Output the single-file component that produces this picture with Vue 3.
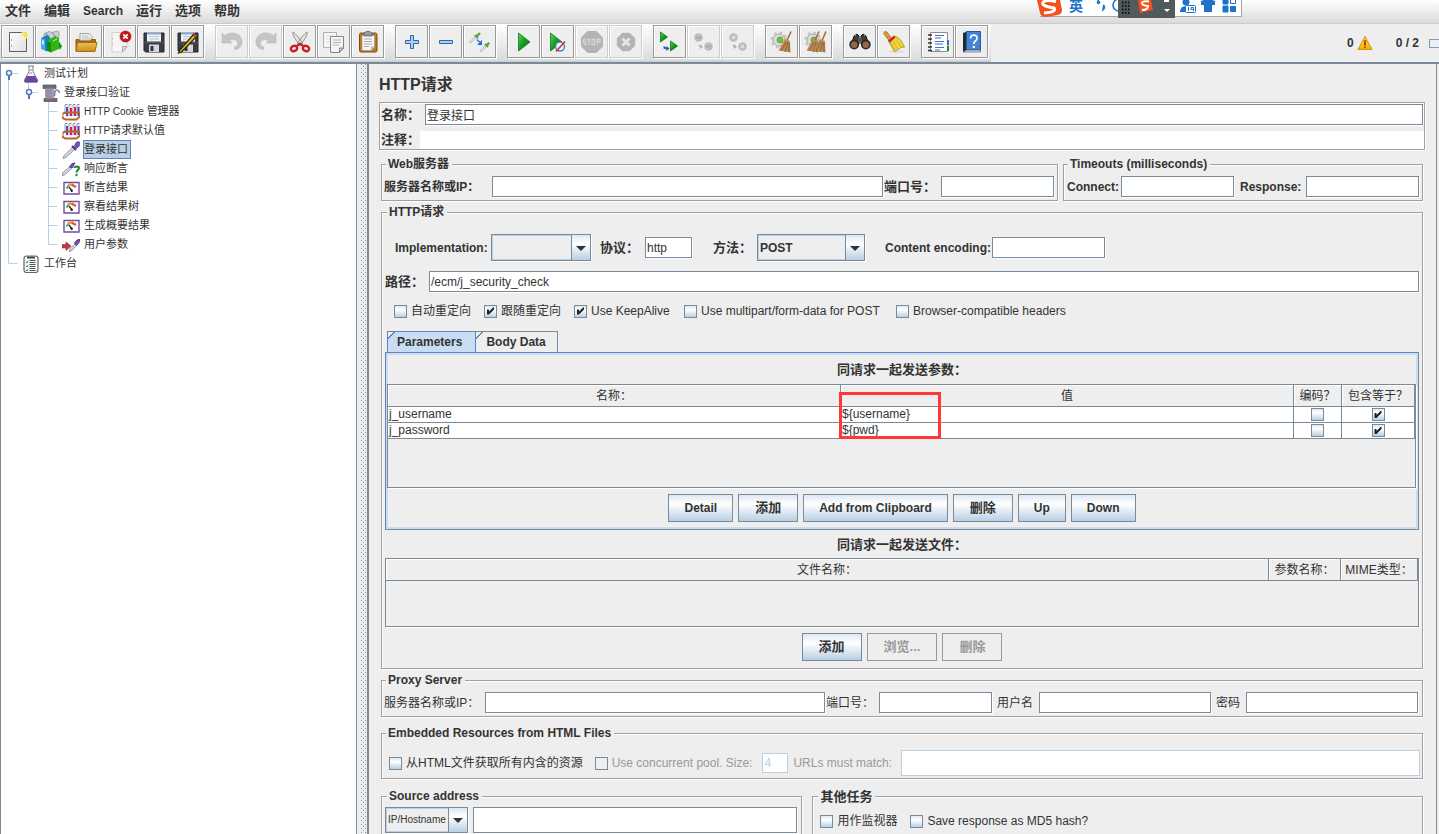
<script setup>
import { ref } from 'vue'

const menus = ['文件', '编辑', 'Search', '运行', '选项', '帮助']

const floppy =
  '<path d="M2 3h20v19H3.500l-1.500-1.500z" fill="#3b3d42" stroke="#24262a"/><path d="M5 2.500h14v9H5z" fill="#eef3f8"/><path d="M5 2.500h14v2H5z" fill="#86a9cf"/><path d="M7 6.500h10M7 9h10" stroke="#b9c6d4"/><path d="M7 14.500h10V22H7z" fill="#d5d7da"/><path d="M8.500 16h3v5h-3z" fill="#33353a"/><path d="M2.500 12.500h19" stroke="#55585e"/>'
const broom = (x) =>
  `<path d="M${x + 8} 1.500l-4 9" stroke="#a0703c" stroke-width="1.600"/><path d="M${x + 2} 9l5 2 .5 11.500-12-2z" fill="#b98a58"/><path d="M${x + 3} 12l-5 9M${x + 5} 12l-3 10M${x + 6} 13v9" stroke="#80552a" stroke-width=".7"/>`
const gear =
  '<circle cx="9" cy="10" r="6" fill="#dcdcdc" stroke="#a5a5a5"/><circle cx="9" cy="10" r="7.500" fill="none" stroke="#c4c4c4" stroke-width="2" stroke-dasharray="3 2.900"/><circle cx="10" cy="10" r="3" fill="#74c52c" stroke="#578f2b" stroke-width=".7"/>'
const play = (x, y, s, h) =>
  `<path d="M${x} ${y}l${s} ${h}l-${s} ${h}z" fill="url(#g-green)" stroke="#087a14" stroke-width=".8"/>`
const octagon = (cx, cy, r) => {
  const k = r * 0.42
  return `<path d="M${cx - k} ${cy - r}h${2 * k}l${r - k} ${r - k}v${2 * k}l-${r - k} ${r - k}h-${2 * k}l-${r - k} -${r - k}v-${2 * k}z" fill="#b4b4b4" stroke="#a6a6a6" stroke-width=".7"/>`
}

const glyphs = {
  blank: '<path d="M3.500 2.500h17v19h-17z" fill="url(#g-page)" stroke="#5f5f5f"/><path d="M5.500 9v2M5.500 15v2" stroke="#aaa"/><circle cx="19" cy="5" r="4" fill="#fff3a0" opacity=".8"/><path d="M19 1.500l1 2.500 2.500 1-2.500 1-1 2.500-1-2.500-2.500-1 2.500-1z" fill="#f2df62"/>',
  templates: '<path d="M4 3.500l5-2 3 1 5-1.500 2 1v7H4z" fill="#c9ced2" stroke="#8c9296" stroke-width=".7"/><path d="M6 3l3 4M12 2l3 4" stroke="#888"/><path d="M1 8l6-3 3 2v13l-3 1.500-6-3z" fill="#1a80c6"/><path d="M1 8l4 1v11.500l-4-2z" fill="#42aee8"/><path d="M2 10l2 .8v4l-2-.8z" fill="#c5ebff"/><path d="M15 6l7 10-2 4z" fill="#188c0c"/><path d="M7 11l8-5 4 2v11l-8 3.500-4-2z" fill="#31b615"/><path d="M7 11l4 1.500v10l-4-2z" fill="#158b0a"/><path d="M13 11l4-2" stroke="#bdf59d"/>',
  open: '<path d="M6 11V3.500h9l3 3V12z" fill="#eee" stroke="#8f8f8f" stroke-width=".8"/><path d="M8 6h6M8 8h8M8 10h8" stroke="#bbb"/><path d="M2 21V9.500h3L6 11h11V9.500h4.500V14" fill="#a76f15" stroke="#916012"/><path d="M3.500 12.500h19.500l-2 9H2z" fill="url(#g-folder)" stroke="#a76f15"/>',
  close: '<path d="M4 2.500h15v14l-5 5.500H4z" fill="#f6f6f6" stroke="#d2d2d2"/><path d="M19 16.500h-4.500V22z" fill="#ddd" stroke="#999" stroke-width=".8"/><path d="M4.500 8v1M4.500 14v1" stroke="#aaa"/><circle cx="17.500" cy="6.500" r="5.500" fill="#c81414" stroke="#8e0f0f" stroke-width=".6"/><path d="M15.300 4.300l4.400 4.400m0-4.400l-4.400 4.400" stroke="#fff" stroke-width="1.800"/>',
  save: floppy,
  saveAs: floppy + '<path d="M17.500 4.500L3.500 20.500l-1 2.500 3-1L20 7z" fill="#e6b92b" stroke="#2e2504" stroke-width="1.200"/><path d="M17 4.500l2.500 3L21 5.500 18.500 3z" fill="#d34a40" stroke="#65201c" stroke-width=".6"/>',
  undo: '<path d="M2 3l2.500 2.500C11 .8 21 2.500 22 11c.5 5-3 8.500-7.500 8.500v-2.800c3.500-.7 4-3.200 2.500-5.200-2-2.500-5.500-2.300-7.500-.8L12 13H2z" fill="#c5c5c5" stroke="#b9b9b9" stroke-width=".6"/>',
  redo: '<path d="M22 3l-2.500 2.500C13 .8 3 2.500 2 11c-.5 5 3 8.500 7.500 8.500v-2.800C6 16 5.500 13.500 7 11.500c2-2.500 5.500-2.300 7.500-.8L12 13h10z" fill="#c5c5c5" stroke="#b9b9b9" stroke-width=".6"/>',
  cut: '<path d="M5 2c-1 3 3 9 8 14l2-2C12 9 8 4 5 2zM19 2c1 3-3 9-8 14l-2-2c3-5 7-10 10-12z" fill="#e3e3e3" stroke="#858585" stroke-width=".9"/><ellipse cx="6" cy="18.500" rx="3.200" ry="2.600" fill="#eee" stroke="#cf1820" stroke-width="2.400" transform="rotate(-20 6 18.500)"/><ellipse cx="18" cy="18.500" rx="3.200" ry="2.600" fill="#eee" stroke="#cf1820" stroke-width="2.400" transform="rotate(20 18 18.500)"/><path d="M9 16l3-2.500 3 2.500" fill="none" stroke="#cf1820" stroke-width="2"/>',
  copy: '<path d="M1.500 2.500h13v15h-13z" fill="#f6f6f6" stroke="#b0b0b0"/><path d="M4 6h8M4 9h8M4 12h8" stroke="#ddd"/><path d="M8.500 6.500h13V18l-4 4.500h-9z" fill="#f4f4f4" stroke="#858585"/><path d="M21.500 18h-4v4.500z" fill="#ccc" stroke="#777" stroke-width=".8"/><path d="M11 10h8M11 12.500h8M11 15h6" stroke="#b4b4b4"/>',
  paste: '<rect x="3.500" y="3" width="17.500" height="19" rx="1.500" fill="#bd7a1c" stroke="#7e4d0d"/><path d="M6 5.500h12.500V17l-3.500 3.500H6z" fill="#f7f7f7" stroke="#999" stroke-width=".7"/><path d="M18.500 16.500H15v4z" fill="#bbb"/><path d="M8 9h8M8 11.500h8M8 14h8M8 16.500h5" stroke="#aaa"/><path d="M8 3.500l2-2h4l2 2v2.500H8z" fill="#999" stroke="#5c5c5c" stroke-width=".8"/>',
  plus: '<path d="M10.500 5.500h3v5h5v3h-5v5h-3v-5h-5v-3h5z" fill="#a9d0f2" stroke="#2d67a8"/>',
  minus: '<path d="M5.500 10.500h13v3h-13z" fill="#a9d0f2" stroke="#2d67a8"/>',
  toggle: '<path d="M2 12.500l6-6" stroke="#aaa" stroke-width="2"/><path d="M2.500 12l5-5" stroke="#fff"/><path d="M7 5l3 3M8.500 6.500L12 3" stroke="#5c9f48" stroke-width="2.400"/><path d="M12.500 21.500l5-5" stroke="#aaa" stroke-width="2"/><path d="M13 21l5-5" stroke="#fff"/><path d="M17 14l3 3M18.500 15l3-2" stroke="#5c9f48" stroke-width="2.200"/><path d="M9 9.500l3 3" stroke="#2a78e6" stroke-width="1.600"/><path d="M14 10v5H9z" fill="#1c6ce6"/>',
  run: play(6.5, 3, 11.5, 9),
  runNoTimers: play(4.5, 3, 11.5, 9) + '<circle cx="14" cy="16.500" r="4.500" fill="#e9f1fb" stroke="#4a80c5" stroke-width="1.400"/><path d="M10 21.500l9-10" stroke="#df2626" stroke-width="1.500"/>',
  stop: octagon(12, 12, 10.5) + '<path d="M6 9.500H3.500V12H6v2.500H3.500M7 9.500h3.500M8.800 9.500V15M12 9.500h2.500v5H12zM17 15V9.500h3V12h-3" fill="none" stroke="#d6d6d6" stroke-width="1.300"/>',
  shutdown: octagon(12, 12, 8.7) + '<path d="M8.500 8.500l7 7m0-7l-7 7" stroke="#e6e6e6" stroke-width="2.800"/>',
  remoteStart: play(2.5, 2, 7, 5) + play(12.5, 11, 7, 5) + '<path d="M5.500 16l3 1.500V16l3 2.500-3 2.500v-1.500l-3-1z" fill="#315aa0"/>',
  remoteStop: '<circle cx="6.500" cy="7.500" r="4.300" fill="#bcbcbc"/><circle cx="16.500" cy="16.500" r="4.300" fill="#bcbcbc"/><path d="M4 7.500h5M14 16.500h5" stroke="#a6a6a6" stroke-width="1.600"/><path d="M6 14.500l2 1v-1.500l3 3-3 2v-1.500z" fill="#b2b2b2"/>',
  remoteShutdown: '<circle cx="7.500" cy="7.500" r="4.300" fill="#bcbcbc"/><circle cx="16.500" cy="16.500" r="4.300" fill="#bcbcbc"/><path d="M6 6l3 3m0-3l-3 3M15 15l3 3m0-3l-3 3" stroke="#e2e2e2" stroke-width="1.500"/><path d="M6 14.500l2 1v-1.500l3 3-3 2v-1.500z" fill="#b2b2b2"/>',
  clear: gear + broom(13),
  clearAll: gear + broom(7) + broom(14),
  search: '<path d="M6 6l3-2 2 2v8H3.500zM18 6l-3-2-2 2v8h7.500z" fill="#3d3d3d" stroke="#181818"/><path d="M10 8h4v4h-4z" fill="#555"/><circle cx="6.200" cy="14.500" r="4.900" fill="#292929"/><circle cx="17.800" cy="14.500" r="4.900" fill="#292929"/><circle cx="6.200" cy="14.800" r="3" fill="#a5602f" stroke="#777" stroke-width=".7"/><circle cx="17.800" cy="14.800" r="3" fill="#a5602f" stroke="#777" stroke-width=".7"/><path d="M7 6l1-1M16 5l1 1" stroke="#aaa"/>',
  resetSearch: '<ellipse cx="15" cy="21.500" rx="8" ry="1.500" fill="#ddd"/><path d="M2 2.500c1-1.500 2.500-1 3.500 0l4 6-2.500 2-4-5c-1-1-1.500-2-1-3z" fill="#dc9c31" stroke="#94611a" stroke-width=".7"/><path d="M7 11l6-5c5 2 7 6 9.500 11-2 .5-4 0-5 1.500-2 .5-3 3-5 3C11 18 8 15 7 11z" fill="#f1d637" stroke="#a88512" stroke-width=".8"/><path d="M11 11l5 8M14 9l5 8M9 13l4 7" stroke="#cdab22" stroke-width=".8"/><path d="M6 10.500l6-5 1.500 2L7.500 13z" fill="#cf2420"/>',
  functions: '<path d="M4.500 2.500h17v19h-17z" fill="#fff" stroke="#8d8d8d"/><path d="M21 10h2v5h-2z" fill="#2673e0"/><path d="M21 16h2v5h-2z" fill="#149214"/><path d="M9 5.500h9M9 8h6M9 11.500h9M9 14h8M9 17.500h9M9 20h5" stroke="#3d6fce"/><path d="M2 5h4M2 9h4M2 13h4M2 17h4M2 20.500h4" stroke="#333" stroke-width="1.600"/>',
  help: '<path d="M3 3l4-1.500v19L3 22z" fill="#232a35"/><path d="M6.500 1.500h14V20h-14z" fill="#4384d8" stroke="#27589c"/><path d="M3 22l3.500-2h14v2z" fill="#dadada" stroke="#3a4a60" stroke-width=".6"/><path d="M10.500 8.500c0-4.500 7-4.500 6.500 0C16.800 11 13.800 11 13.800 14" fill="none" stroke="#fff" stroke-width="1.700"/><circle cx="13.800" cy="17" r="1.200" fill="#fff"/>'
}

const toolbar = [
  [['blank', '新建'], ['templates', '模板'], ['open', '打开'], ['close', '关闭'], ['save', '保存'], ['saveAs', '另存为']],
  [['undo', '撤销', true], ['redo', '重做', true], ['cut', '剪切'], ['copy', '复制'], ['paste', '粘贴']],
  [['plus', '展开'], ['minus', '折叠'], ['toggle', '切换']],
  [['run', '启动'], ['runNoTimers', '不停顿启动'], ['stop', '停止', true], ['shutdown', '关停', true]],
  [['remoteStart', '远程启动'], ['remoteStop', '远程停止', true], ['remoteShutdown', '远程关停', true]],
  [['clear', '清除'], ['clearAll', '清除全部']],
  [['search', '查找'], ['resetSearch', '重置查找']],
  [['functions', '函数助手'], ['help', '帮助']]
]

const rack =
  '<path d="M5 2v12M9 2v12M13 2v12M16.500 2v11" stroke="#e9e9f4" stroke-width="3"/><path d="M3 1.500h15" stroke="#8d8d9b" stroke-dasharray="2.500 1.500"/><path d="M5 4v9M16.500 4v9" stroke="#4a4bc0" stroke-width="2"/><path d="M9 5v8M13 4v9" stroke="#d6254d" stroke-width="2"/><path d="M3 2v8M7 2v11M11 2v11M15 2v11" stroke="#8c86ac" stroke-width=".8"/><path d="M1 10.500l3-1h13.500M0 14.500l3.500 2h11l3.500-3" fill="none" stroke="#b5652b" stroke-width="2"/><path d="M1 10v5M17.500 9v5" stroke="#b5652b"/>'
const gauge =
  '<path d="M2 3.500h15v11.500H2z" fill="#fff" stroke="#6d509f" stroke-width="1.400"/><path d="M4.500 9.500l2-3" stroke="#36b54a" stroke-width="2"/><path d="M6 6.500l3.500-1.500" stroke="#e99a2e" stroke-width="2.200"/><path d="M9.500 5.500l4.500 2.500" stroke="#e9513a" stroke-width="2.400"/><path d="M7 8l3 4" stroke="#222" stroke-width="1.300"/><circle cx="9.700" cy="11.700" r="1.200" fill="#222"/>'
const treeGlyphs = {
  flask: '<path d="M6 1h6M7 1v5.500L2.500 15c-.5 1 0 2 1 2h11c1 0 1.500-1 1-2L11 6.500V1" fill="#f8f8fc" stroke="#7d7d8c"/><path d="M5 11h8l3 5-1 1.500H3L2 16z" fill="#6d45a8"/><path d="M8 5h2M7.500 8h2.500" stroke="#8d8d9b"/>',
  spool: '<path d="M1 1h13v3.500H1zM2 14.500h13v3H2z" fill="#736a80" stroke="#4e475a" stroke-width=".7"/><path d="M3 4.500h9.500v10H3z" fill="#a79db5"/><path d="M5 5v9M7 5v9M9 5v9" stroke="#83788f" stroke-width=".8"/><path d="M12.500 12c0-4 .5-6 2.500-6s2 1 2.500 3" fill="none" stroke="#85799a" stroke-width="1.600"/>',
  rack,
  pipette: '<path d="M1 17.500l1-3L11 6l2 2-9 8.500z" fill="#d5d5de" stroke="#85858f" stroke-width=".8"/><path d="M10 5l4 4" stroke="#4d3488" stroke-width="2"/><path d="M12 6l2-4.500L17 .5l1 1.500-1 3.500L13.500 8z" fill="#7554b5" stroke="#54358f" stroke-width=".7"/>',
  assertion: '<path d="M0 15.500l1-3 7-6 1.500 2L2.500 15z" fill="#d5d5de" stroke="#85858f" stroke-width=".8"/><path d="M7.500 7L10 3.500l3-.5-3 5z" fill="#7554b5" stroke="#54358f"/><path d="M12.500 8c0-2 4.500-2 4.500 0s-2.500 2-2.500 4.500" fill="none" stroke="#218034" stroke-width="2"/><circle cx="14.500" cy="15" r="1.200" fill="#218034"/>',
  gauge,
  params: '<path d="M0 8.500h4V6l5 4-5 4.500V12H0z" fill="#c13a43" stroke="#8a2930" stroke-width=".6"/><path d="M7 15.500l1-3 5-4.500 1.500 2L9 15z" fill="#d5d5de" stroke="#85858f" stroke-width=".8"/><path d="M12.500 7L15 4l3-.5-1 3-2.500 3z" fill="#7554b5" stroke="#54358f"/>',
  bench: '<rect x="2" y="1" width="14" height="16.500" rx="2.500" fill="#f6f6f6" stroke="#666" stroke-width="1.200"/><path d="M5 2.500h8" stroke="#444" stroke-width="2"/><path d="M4 7l1 1 1-2M4 11l1 1 1-2M4 15l1 1 1-2" fill="none" stroke="#289a31"/><path d="M7.500 5.500h6M7.500 7.500h6M7.500 9.500h6M7.500 11.500h6M7.500 13.500h6M7.500 15.500h6" stroke="#555"/>'
}
const knob = (x) =>
  `<path d="M${x} 9.500h9" stroke="#b8cfe5"/><circle cx="${x}" cy="9" r="2.500" fill="#fff" stroke="#5578b8" stroke-width="1.500"/><path d="M${x} 11v5" stroke="#5578b8" stroke-width="2"/>`
const trunk = '<path d="M8.500 0v19" stroke="#b8cfe5"/>'
const leaf = (last) => `${trunk}<path d="M48.500 0v${last ? 9.5 : 19}M48.500 9.500h9" fill="none" stroke="#b8cfe5"/>`

const tree = [
  { depth: 1, guide: '<path d="M8.500 9v10" stroke="#b8cfe5"/>' + knob(9), icon: 'flask', text: '测试计划' },
  { depth: 2, guide: trunk + '<path d="M28.500 0v9" stroke="#b8cfe5"/>' + knob(29), icon: 'spool', text: '登录接口验证' },
  { depth: 3, guide: leaf(), icon: 'rack', latin: 'HTTP Cookie ', text: '管理器' },
  { depth: 3, guide: leaf(), icon: 'rack', latin: 'HTTP', text: '请求默认值' },
  { depth: 3, guide: leaf(), icon: 'pipette', text: '登录接口', selected: true },
  { depth: 3, guide: leaf(), icon: 'assertion', text: '响应断言' },
  { depth: 3, guide: leaf(), icon: 'gauge', text: '断言结果' },
  { depth: 3, guide: leaf(), icon: 'gauge', text: '察看结果树' },
  { depth: 3, guide: leaf(), icon: 'gauge', text: '生成概要结果' },
  { depth: 3, guide: leaf(true), icon: 'params', text: '用户参数' },
  { depth: 1, guide: '<path d="M8.500 0v9.500h9" fill="none" stroke="#b8cfe5"/>', icon: 'bench', text: '工作台' }
]
const guideWidth = { 1: 22, 2: 42, 3: 62 }

const name = ref('登录接口')
const protocol = ref('http')
const path = ref('/ecm/j_security_check')
const poolSize = ref('4')
const options = ref([
  { text: '自动重定向', on: false },
  { text: '跟随重定向', on: true },
  { text: 'Use KeepAlive', on: true },
  { text: 'Use multipart/form-data for POST', on: false },
  { text: 'Browser-compatible headers', on: false }
])
const params = ref([
  { name: 'j_username', value: '${username}', encode: false, equals: true },
  { name: 'j_password', value: '${pwd}', encode: false, equals: true }
])
const paramActions = ['Detail', '添加', 'Add from Clipboard', '删除', 'Up', 'Down']
const fileActions = [
  { text: '添加', off: false },
  { text: '浏览...', off: true },
  { text: '删除', off: true }
]
const isCjk = (s) => /[\u4e00-\u9fff]/.test(s)
</script>

<template>
  <div class="app">
    <svg class="defs" width="0" height="0" aria-hidden="true">
      <defs>
        <linearGradient id="g-green" x2="1" y2="1"><stop offset="0" stop-color="#5fd45c" /><stop offset=".5" stop-color="#129a1c" /><stop offset="1" stop-color="#0a7d12" /></linearGradient>
        <linearGradient id="g-page" x2="1" y2="1"><stop offset="0" stop-color="#fff" /><stop offset="1" stop-color="#dedede" /></linearGradient>
        <linearGradient id="g-folder" x2="0" y2="1"><stop offset="0" stop-color="#f0be55" /><stop offset="1" stop-color="#cf8d1d" /></linearGradient>
        <linearGradient id="g-warn" x2="0" y2="1"><stop offset="0" stop-color="#ffe63b" /><stop offset="1" stop-color="#f7b500" /></linearGradient>
      </defs>
    </svg>

    <nav class="menubar">
      <button v-for="m in menus" :key="m" type="button" :class="{ cjk: isCjk(m) }">{{ m }}</button>
    </nav>

    <div class="ime" aria-hidden="true">
      <svg width="207" height="18" viewBox="0 0 207 18">
        <path d="M1 0h205v16H6z" fill="#fff" />
        <path d="M4 16.500h201.500V0" fill="none" stroke="#9fa3b3" />
        <path d="M1 0h23l2 10q0 4-4 5l-12 2q-5 0-6-4z" fill="#f4511e" />
        <path d="M20 1.500Q9-1 7 2.500T18 8q3 4-10 5" fill="none" stroke="#fff" stroke-width="3" />
        <path d="M62 0l2 2-1 2-2-1zM67 5c3 0 2 5-1 6" fill="#1e73c8" stroke="#1e73c8" />
        <circle cx="83" cy="5" r="6" fill="none" stroke="#1e73c8" stroke-width="1.600" />
        <path d="M82 0h57v18H82z" fill="#515b5d" />
        <path d="M86 2.500h9M86 6h9M86 9.500h9M86 13h9" stroke="#111" stroke-width="2" stroke-dasharray="1.500 1.500" />
        <path d="M102 0h13l2 10-13 3z" fill="#f4511e" />
        <path d="M113 1.500q-7-1-7 1.500t6 3q0 4-6 4" fill="none" stroke="#fff" stroke-width="2" />
        <path d="M128 0h5v2h-5zM128 9h6l-3 3z" fill="#fff" />
        <circle cx="150" cy="2" r="3.500" fill="#1e73c8" /><path d="M144 12q0-6 6-6t6 6z" fill="#1e73c8" />
        <rect x="149.500" y="5.500" width="10" height="7" rx="1" fill="#fff" stroke="#1e73c8" /><path d="M152.500 7v4M157.500 11V7.500h-2.500v2h2.500" fill="none" stroke="#1e73c8" />
        <path d="M165 1l4-1.500h6l4 1.500v4h-3v7h-8V5h-3z" fill="#1e73c8" />
        <path d="M187 0h5v4h-5zM187 6h5v6h-5zM194.500 6.500h5v5h-5z" fill="#1e73c8" stroke="#1e73c8" /><path d="M194.500 0v3.500h5V0" fill="none" stroke="#1e73c8" />
      </svg>
      <span class="ime-mode">英</span>
    </div>

    <div class="toolbar">
      <div class="tools">
        <div v-for="(group, g) in toolbar" :key="g" class="group">
          <button v-for="t in group" :key="t[0]" type="button" :disabled="t[2]" :aria-label="t[1]">
            <svg width="24" height="24" viewBox="0 0 24 24" v-html="glyphs[t[0]]"></svg>
          </button>
        </div>
      </div>
      <div class="status">
        <span>0</span>
        <svg class="warn" width="16" height="16" viewBox="0 0 15 15"><path d="M7.500 1.500l6.500 12H1z" fill="url(#g-warn)" stroke="#e0931a" stroke-linejoin="round" /><path d="M7.500 5v5M7.500 11v1.500" stroke="#b23c08" stroke-width="1.800" /></svg>
        <span class="threads">0 / 2</span>
        <span class="led"></span>
      </div>
    </div>

    <div class="body">
      <aside class="tree">
        <div v-for="(n, i) in tree" :key="i" class="node">
          <svg :width="guideWidth[n.depth]" height="19" v-html="n.guide"></svg>
          <svg width="18" height="18" viewBox="0 0 18 18" v-html="treeGlyphs[n.icon]"></svg>
          <span class="node-text" :class="{ selected: n.selected }"><span v-if="n.latin" class="latin">{{ n.latin }}</span>{{ n.text }}</span>
        </div>
      </aside>
      <div class="splitter"></div>

      <main class="panel">
        <h1>HTTP请求</h1>
        <div class="naming">
          <div class="line"><label for="name" class="cjk">名称：</label><input id="name" v-model="name" class="grow" /></div>
          <div class="line"><label for="note" class="cjk note-label">注释：</label><input id="note" class="grow note" /></div>
        </div>

        <div class="sections">
          <div class="pair">
            <fieldset class="grow">
              <legend>Web服务器</legend>
              <div class="line">
                <label for="server" class="w-server">服务器名称或IP：</label><input id="server" class="grow" />
                <label for="port" class="cjk w-port">端口号：</label><input id="port" class="short" />
              </div>
            </fieldset>
            <fieldset>
              <legend>Timeouts (milliseconds)</legend>
              <div class="line">
                <label for="connect" class="w-connect">Connect:</label><input id="connect" class="short" />
                <label for="response" class="w-response">Response:</label><input id="response" class="short" />
              </div>
            </fieldset>
          </div>

          <fieldset class="http">
            <legend>HTTP请求</legend>
            <div class="line request">
              <label for="impl" class="w-impl">Implementation:</label>
              <div class="combo impl"><select id="impl"><option></option></select><span class="arrow"></span></div>
              <label for="protocol" class="cjk w-protocol">协议：</label><input id="protocol" v-model="protocol" class="tiny" />
              <label for="method" class="cjk w-method">方法：</label>
              <div class="combo method"><select id="method"><option>POST</option></select><span class="arrow"></span></div>
              <label for="encoding" class="w-encoding">Content encoding:</label><input id="encoding" class="short" />
            </div>
            <div class="line path"><label for="path" class="cjk w-path">路径：</label><input id="path" v-model="path" class="grow" /></div>
            <div class="options">
              <label v-for="o in options" :key="o.text" class="check"><input v-model="o.on" type="checkbox" />{{ o.text }}</label>
            </div>

            <div class="tabs" role="tablist">
              <button type="button" role="tab" aria-selected="true" class="active">Parameters</button>
              <button type="button" role="tab" aria-selected="false">Body Data</button>
            </div>
            <div class="pane">
              <h2>同请求一起发送参数：</h2>
              <div class="viewport params">
                <table>
                  <colgroup><col /><col /><col class="c-encode" /><col class="c-equals" /></colgroup>
                  <thead>
                    <tr>
                      <th>名称：</th>
                      <th class="marked">值<span class="marker"></span></th>
                      <th>编码？</th>
                      <th>包含等于？</th>
                    </tr>
                  </thead>
                  <tbody>
                    <tr v-for="p in params" :key="p.name">
                      <td>{{ p.name }}</td>
                      <td>{{ p.value }}</td>
                      <td class="mid"><input v-model="p.encode" type="checkbox" :aria-label="p.name + ' 编码'" /></td>
                      <td class="mid"><input v-model="p.equals" type="checkbox" :aria-label="p.name + ' 包含等于'" /></td>
                    </tr>
                  </tbody>
                </table>
              </div>
              <div class="actions">
                <button v-for="a in paramActions" :key="a" type="button" class="push" :class="{ cjk: isCjk(a) }">{{ a }}</button>
              </div>
            </div>

            <h2 class="files-title">同请求一起发送文件：</h2>
            <div class="viewport files">
              <table>
                <colgroup><col /><col class="c-param" /><col class="c-mime" /></colgroup>
                <thead><tr><th>文件名称：</th><th>参数名称：</th><th>MIME类型：</th></tr></thead>
              </table>
            </div>
            <div class="actions">
              <button v-for="a in fileActions" :key="a.text" type="button" class="push cjk" :disabled="a.off">{{ a.text }}</button>
            </div>
          </fieldset>

          <fieldset class="proxy">
            <legend>Proxy Server</legend>
            <div class="line">
              <label for="proxy-host" class="w-phost">服务器名称或IP：</label><input id="proxy-host" class="grow" />
              <label for="proxy-port" class="w-pport">端口号：</label><input id="proxy-port" class="short" />
              <label for="proxy-user" class="w-user">用户名</label><input id="proxy-user" class="medium" />
              <label for="proxy-pass" class="w-pass">密码</label><input id="proxy-pass" type="password" class="medium" />
            </div>
          </fieldset>

          <fieldset class="embedded">
            <legend>Embedded Resources from HTML Files</legend>
            <div class="line">
              <label class="check"><input type="checkbox" />从HTML文件获取所有内含的资源</label>
              <label class="check pool"><input type="checkbox" disabled />Use concurrent pool. Size:</label>
              <input v-model="poolSize" class="size" disabled aria-label="Size" />
              <label for="urls" class="w-urls">URLs must match:</label><input id="urls" class="grow urls" disabled />
            </div>
          </fieldset>

          <div class="bottom">
            <fieldset>
              <legend>Source address</legend>
              <div class="line source">
                <div class="combo kind"><select aria-label="Source address"><option>IP/Hostname</option></select><span class="arrow"></span></div>
                <input class="grow address" aria-label="Address" />
              </div>
            </fieldset>
            <fieldset>
              <legend class="cjk">其他任务</legend>
              <div class="tasks">
                <label class="check"><input type="checkbox" />用作监视器</label>
                <label class="check"><input type="checkbox" />Save response as MD5 hash?</label>
              </div>
            </fieldset>
          </div>
        </div>
      </main>
    </div>
  </div>
</template>

<style>
body { background: #eee; }
</style>

<style scoped>
* { box-sizing: border-box; }
.app {
  position: relative;
  display: flex;
  flex-direction: column;
  height: 100vh;
  overflow: hidden;
  background: #eee;
  color: #333;
  font: 12px/18px "Liberation Sans", "Noto Sans CJK SC", sans-serif;
}
.defs { position: absolute; }
button, input, select { margin: 0; font: inherit; color: inherit; }

.menubar {
  display: flex;
  flex: none;
  gap: 13px;
  height: 24px;
  padding: 0 5px 2px;
  background: linear-gradient(#fff, #dadada);
  border-bottom: 1px solid #ccc;
}
.menubar button { padding: 0; border: 0; background: none; font-weight: bold; line-height: 20px; }
.cjk, .menubar .cjk { font-size: 13px; }

.ime { position: absolute; top: 0; right: 196px; width: 207px; height: 18px; }
.ime svg { display: block; }
.ime-mode { position: absolute; left: 33px; top: 0; color: #1e73c8; font-size: 14px; font-weight: bold; line-height: 12px; }

.toolbar { display: flex; flex: none; justify-content: space-between; height: 38px; }
.tools {
  display: flex;
  gap: 11px;
  padding: 1px 3px 0 1px;
  background: linear-gradient(#fff, #dadada);
  border-bottom: 1px solid #ccc;
}
.group { display: flex; gap: 1px; }
.group button {
  display: grid;
  place-items: center;
  width: 33px;
  height: 33px;
  padding: 0;
  background: #eee;
  border: 1px solid #999;
  box-shadow: inset 1px 1px 0 #fff, 1px 1px 0 #fff;
}
.group button:disabled { border-color: #ccc; }
.status { display: flex; align-items: center; font-weight: bold; }
.warn { margin-left: 3px; }
.threads { margin-left: 23px; }
.led { width: 10px; height: 9px; margin-left: 10px; border: 1px solid #8a9aab; border-right: 0; background: #e7eff8; }

.body { display: flex; flex: 1; min-height: 0; border-top: 2px solid #7a8a99; }
.tree { flex: none; width: 357px; background: #fff; border: solid #7a8a99; border-width: 0 1px; }
.node { display: flex; align-items: center; height: 19px; margin-left: -1px; font-size: 11px; }
.node svg { flex: none; }
.node-text { display: block; margin-left: 3px; padding-right: 2px; border: 1px solid transparent; line-height: 17px; white-space: pre; }
.node-text.selected { background: #b8cfe5; border-color: #6382bf; }
.latin { font-size: 10px; }
.splitter {
  flex: none;
  width: 10px;
  border-left: 4px solid #eee;
  background: conic-gradient(at 1px 1px, transparent 270deg, #8a9aab 270deg) 0 0 / 4px 4px,
    conic-gradient(at 1px 1px, transparent 270deg, #8a9aab 270deg) 2px 2px / 4px 4px, #eee;
}

.panel { flex: 1; min-width: 0; margin-right: 2px; padding: 10px 11px 0 10px; border-left: 2px solid #7a8a99; border-right: 1px solid #7a8a99; overflow: hidden; }
h1 { margin: 0 0 6px; font-size: 16px; line-height: 22px; }
h2 { margin: 0; font-size: 13px; line-height: 18px; text-align: center; }
.line { display: flex; align-items: center; }
.line > label { flex: none; font-weight: bold; white-space: nowrap; }
.grow { flex: 1; min-width: 0; }
input:not([type="checkbox"]) { height: 21px; padding: 0 1px; background: #fff; border: 1px solid #7a8a99; border-radius: 0; outline: 0; box-shadow: 1px 1px 0 #fff; }
.short { width: 113px; }
.medium { width: 172px; }
.tiny { width: 47px; }

.naming { display: grid; gap: 6px; padding: 1px 0 0 1px; border: 1px solid #a0a0a0; box-shadow: inset 1px 1px 0 #fff, 1px 1px 0 #fff; }
.naming label { width: 44px; }
.naming .note-label { width: 39px; }
.naming #name { margin-right: 1px; }
.naming input.note { height: 18px; border: 0; box-shadow: none; }

.sections { padding: 6px 2px 0; }
fieldset { min-width: 0; margin: 0; padding: 3px 3px 3px 2px; border: 1px solid #a0a0a0; box-shadow: inset 1px 1px 0 #fff, 1px 1px 0 #fff; }
legend { margin-left: 2px; padding: 0 3px 0 2px; background: #eee; font-weight: bold; line-height: 17px; }
.pair { display: flex; gap: 5px; }
.w-server { width: 108px; }
.w-port { width: 58px; padding-left: 1px; }
.w-connect { width: 55px; padding-left: 1px; }
.w-response { width: 72px; padding-left: 6px; }

fieldset.http { margin-top: 3px; padding: 13px 3px 7px; }
.request { padding-left: 10px; }
.w-impl { width: 96px; }
.w-protocol { width: 54px; padding-left: 9px; }
.w-method { width: 65px; padding-left: 21px; }
.w-encoding { width: 127px; padding-left: 20px; }
.combo { display: flex; position: relative; height: 27px; border: 1px solid #7a8a99; box-shadow: 1px 1px 0 #fff; }
.combo select { width: 100%; padding: 0 20px 0 1px; appearance: none; background: #eee; border: 1px solid #b8cfe5; border-radius: 0; font-weight: bold; outline: 0; }
.arrow { position: absolute; top: 0; right: 0; bottom: 0; width: 19px; border-left: 1px solid #7a8a99; background: linear-gradient(#dde8f3, #fff 35%, #b8cfe5); pointer-events: none; }
.arrow::after { content: ""; position: absolute; top: calc(50% - 2px); left: 4px; border: 5px solid transparent; border-top-color: #333; border-bottom: 0; }
.impl { width: 100px; }
.method { width: 108px; }
.path { margin-top: 10px; }
.w-path { width: 44px; }
.options { display: grid; grid-template-columns: 90px 90px 110px 212px auto; margin: 10px 0 11px; padding-left: 9px; }
.check { display: flex; align-items: center; gap: 4px; white-space: nowrap; }
input[type="checkbox"] { position: relative; flex: none; width: 13px; height: 13px; appearance: none; border: 1px solid #7a8a99; background: linear-gradient(#dde8f3, #fff 35%, #b8cfe5); }
input[type="checkbox"]:disabled { background: #eee; }
input[type="checkbox"]:checked::after {
  content: "";
  position: absolute;
  inset: 0;
  background: #222;
  clip-path: polygon(2px 4px, 4px 4px, 4px 6px, 8px 2px, 9px 2px, 9px 4px, 4px 9px, 2px 9px);
}

.tabs { display: flex; padding-left: 2px; }
.tabs button {
  height: 21px;
  padding: 0 11px 0 10px;
  background: linear-gradient(135deg, #eee 4px, #7a8a99 4px, #7a8a99 5px, transparent 5px);
  border: solid #7a8a99;
  border-width: 1px 1px 0 0;
  font-weight: bold;
  line-height: 17px;
}
.tabs .active { padding: 0 13px 0 9px; background: linear-gradient(135deg, #eee 4px, #6382bf 4px, #6382bf 5px, #c8ddf2 5px); border: solid #6382bf; border-width: 1px 1px 0 1px; }
.pane { padding: 6px 1px 7px; border: 1px solid #6382bf; border-right-color: #7a8a99; border-bottom-color: #7a8a99; box-shadow: inset 0 0 0 2px #c8ddf2; }
.pane h2 { margin: 2px 0 5px; }
.viewport { border: 1px solid #7a8a99; box-shadow: 1px 1px 0 #fff; }
.params { height: 104px; margin-right: 1px; }
.files { height: 69px; }
table { width: 100%; table-layout: fixed; border-collapse: separate; border-spacing: 0; }
.c-encode { width: 48px; }
.c-equals { width: 73px; }
.c-param { width: 72px; }
.c-mime { width: 77px; }
th, td { height: 16px; padding: 0; border: solid #7a8a99; border-width: 0 1px 1px 0; line-height: 15px; }
th { height: 22px; font-weight: normal; line-height: 20px; text-align: center; box-shadow: inset 1px 1px 0 #fff; }
td { background: #fff; padding-left: 1px; }
td.mid { padding: 0; text-align: center; }
td.mid input { display: block; margin: 1px auto; }
.marked { position: relative; }
.marker { position: absolute; z-index: 1; top: 7px; left: -2px; width: 102px; height: 47px; border: 3px solid #ff3737; }
.actions { display: flex; justify-content: center; gap: 5px; margin-top: 6px; }
.push { height: 28px; padding: 0 15px; border: 1px solid #7a8a99; background: linear-gradient(#dde8f3, #fff 35%, #b8cfe5); font-weight: bold; }
.push.cjk { padding: 0 16px; }
.push:disabled { border-color: #999; background: #eee; color: #999; }
.files-title { margin: 6px 0 4px; }

.proxy { margin-top: 3px; padding-right: 4px; }
.proxy label { font-weight: normal; }
.w-phost { width: 101px; }
.w-pport { width: 54px; padding-left: 1px; }
.w-user { width: 47px; padding-left: 5px; }
.w-pass { width: 35px; padding-left: 5px; }

.embedded { margin-top: 8px; padding: 8px 2px 2px; }
.embedded .line { padding-left: 5px; }
.embedded label { font-weight: normal; }
.embedded .pool { margin: 0 10px 0 12px; color: #999; }
.embedded .size { width: 26px; height: 20px; }
.embedded .urls { height: 26px; }
.embedded input:not([type="checkbox"]):disabled { border-color: #b8cfe5; color: #b8cfe5; box-shadow: none; }
.w-urls { width: 113px; padding-left: 5px; color: #999; }

.bottom { display: grid; grid-template-columns: 421fr 610fr; gap: 10px; margin-top: 9px; }
.bottom fieldset { padding: 2px 4px 6px 3px; }
.source { gap: 5px; }
.combo.kind { width: 83px; height: 26px; }
.kind select { font-size: 10px; font-weight: normal; }
.source .address { height: 26px; }
.tasks { display: flex; gap: 13px; padding: 5px 4px; }
</style>
